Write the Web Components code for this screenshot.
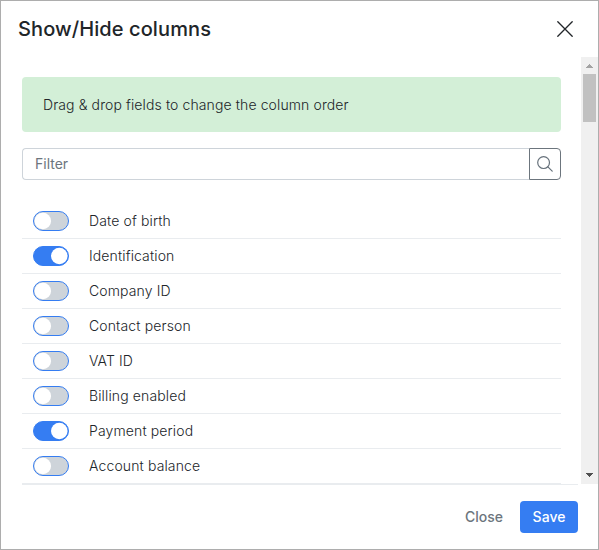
<!DOCTYPE html>
<html lang="en">
<head>
<meta charset="utf-8">
<title>Show/Hide columns</title>
<style>
html,body{margin:0;height:100%;overflow:hidden;background:#fff}
body{font:400 14px/20px Inter,"Liberation Sans",sans-serif;color:#212529}
</style>
</head>
<body>
<column-dialog>
  <info-note>Drag &amp; drop fields to change the column order</info-note>
  <filter-box></filter-box>
  <column-list>
    <column-row>Date of birth</column-row>
    <column-row checked>Identification</column-row>
    <column-row>Company ID</column-row>
    <column-row>Contact person</column-row>
    <column-row>VAT ID</column-row>
    <column-row>Billing enabled</column-row>
    <column-row checked>Payment period</column-row>
    <column-row>Account balance</column-row>
  </column-list>
</column-dialog>
<script>
function define(name, markup) {
  customElements.define(name, class extends HTMLElement {
    constructor() {
      super();
      this.attachShadow({ mode: 'open' }).innerHTML = markup;
    }
  });
}

define('dialog-close', `
<style>
:host{display:block;width:16px;height:16px}
svg{display:block}
</style>
<svg width="16" height="16" viewBox="0 0 16 16" fill="none" stroke="#212529" stroke-width="1.3" stroke-linecap="round"><path d="M.8.8l14.4 14.4M15.2.8L.8 15.2"/></svg>`);

define('scroll-track', `
<style>
:host{display:flex;flex-direction:column;align-items:center;width:17px;background:#f0f0f0}
svg{display:block;width:17px;height:17px}
.thumb{width:13px;height:48px;background:#c1c1c1}
.space{flex:1}
</style>
<svg viewBox="0 0 17 17" shape-rendering="crispEdges"><path fill="#a3a3a3" d="M8 7h1v1h1v1h1v1h1v1H5v-1h1V9h1V8h1z"/></svg>
<div class="thumb"></div><div class="space"></div>
<svg viewBox="0 0 17 17" shape-rendering="crispEdges"><path fill="#505050" d="M5 6h7v1h-1v1h-1v1H9v1H8V9H7V8H6V7H5z"/></svg>`);

define('info-note', `
<style>
:host{display:flex;align-items:center;box-sizing:border-box;height:55px;padding:1px 21px 0;border-radius:4px;background:#d3efd7;font-weight:350;letter-spacing:.11px}
</style><span><slot></slot></span>`);

define('filter-box', `
<style>
:host{display:flex;height:32px;margin-top:16px}
input{flex:1;min-width:0;box-sizing:border-box;padding:0 12px;border:1px solid #ced4da;border-right:0;border-radius:4px 0 0 4px;font:inherit;color:inherit;outline:0;background:#fff}
input::placeholder{color:#6c757d;opacity:1}
button{box-sizing:border-box;width:32px;padding:0;border:1px solid #6c757d;border-radius:0 4px 4px 0;background:#fff;display:grid;place-items:center}
svg{display:block}
</style>
<input type="text" placeholder="Filter"><button aria-label="Search"><svg width="16" height="16" viewBox="0 0 16 16" fill="none" stroke="#66717b" stroke-width="1.2" stroke-linecap="round"><circle cx="6.6" cy="6.6" r="5.9"/><path d="M10.9 10.9l4.3 4.3"/></svg></button>`);

define('column-list', `
<style>:host{display:flex;flex-direction:column;margin-top:24px;font-weight:350;letter-spacing:.13px}</style><slot></slot>`);

define('toggle-switch', `
<style>
:host{display:block;width:36px;height:20px}
svg{display:block}
.track{fill:#ced4da;stroke:#357df2}
.knob{fill:#fff}
:host([on]) .track{fill:#357df2}
:host([on]) .knob{transform:translateX(16.5px)}
</style><svg width="36" height="20" viewBox="0 0 36 20"><rect class="track" x=".5" y=".5" width="35" height="19" rx="9.5"/><circle class="knob" cx="9.8" cy="10" r="8.3"/></svg>`);

customElements.define('column-row', class extends HTMLElement {
  constructor() {
    super();
    this.attachShadow({ mode: 'open' }).innerHTML = `
<style>
:host{display:flex;align-items:center;gap:20px;box-sizing:border-box;height:35px;padding:0 11px;border-bottom:1px solid #e9ecef}
</style><toggle-switch></toggle-switch><span><slot></slot></span>`;
  }
  connectedCallback() {
    this.shadowRoot.querySelector('toggle-switch').toggleAttribute('on', this.hasAttribute('checked'));
  }
});

define('action-button', `
<style>
:host{display:flex;align-items:center;justify-content:center;box-sizing:border-box;height:32px;padding:0 13px;border-radius:4px;font-weight:500;color:#6c757d}
:host([primary]){width:58px;padding:0;background:#357df2;color:#fff}
</style><slot></slot>`);

define('column-dialog', `
<style>
:host{display:flex;flex-direction:column;box-sizing:border-box;width:599px;height:550px;border:1px solid #adadad;background:#fff}
header{display:flex;align-items:center;justify-content:space-between;box-sizing:border-box;height:56px;padding:0 25px 0 17px}
h1{margin:0;font-size:20px;line-height:28px;font-weight:500;letter-spacing:.1px}
main{display:flex;height:427px}
.content{flex:1;padding:20px 20px 0 21px}
footer{display:flex;flex:1;justify-content:flex-end;align-items:flex-start;gap:4px;margin:0 20px 0 21px;padding-top:16px;border-top:1px solid #e9ecef}
</style>
<header><h1>Show/Hide columns</h1><dialog-close></dialog-close></header>
<main><div class="content"><slot></slot></div><scroll-track></scroll-track></main>
<footer><action-button>Close</action-button><action-button primary>Save</action-button></footer>`);
</script>
</body>
</html>
